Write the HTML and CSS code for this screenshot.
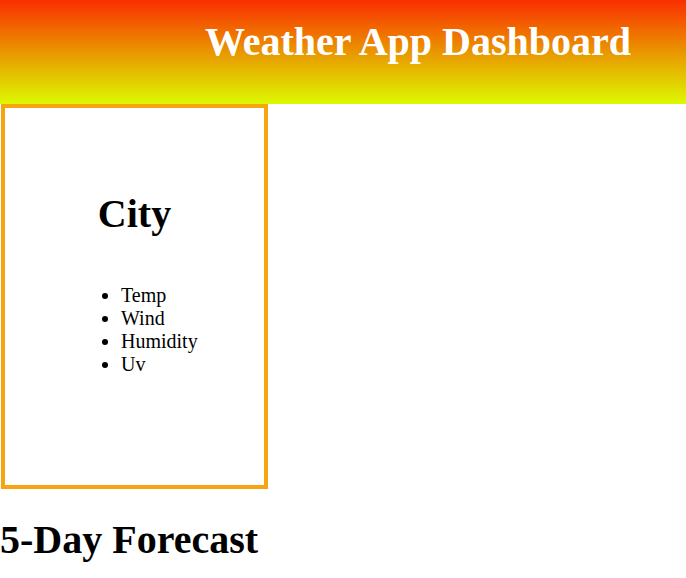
FILE: index.html
```html
<!DOCTYPE html>
<html>
<head>
<meta charset="utf-8">
<link rel="stylesheet" href="styles.css">
</head>
<body>
<header class="header">
  <h1 class="title">Weather App Dashboard</h1>
</header>
<main class="main">
  <section class="city-card">
    <h2 class="city-name">City</h2>
    <ul class="city-stats">
      <li>Temp</li>
      <li>Wind</li>
      <li>Humidity</li>
      <li>Uv</li>
    </ul>
  </section>
  <h2 class="forecast-title">5-Day Forecast</h2>
</main>
</body>
</html>
```
FILE: styles.css
```css
html, body {
  margin: 0;
  padding: 0;
  background: #ffffff;
  font-family: "Liberation Serif", "Times New Roman", serif;
  color: #000;
}
.header {
  height: 104px;
  background: linear-gradient(to bottom, #fa2e00 0%, #e8a000 55%, #ddf900 100%);
  display: flex;
  padding-left: 205px;
  box-sizing: border-box;
}
.title {
  margin: 20px 0 0 0;
  color: #fff;
  font-size: 40px;
  font-weight: bold;
  line-height: 44px;
}
.main {
  display: flex;
  flex-direction: column;
  align-items: flex-start;
}
.city-card {
  margin-left: 1px;
  width: 267px;
  height: 385px;
  box-sizing: border-box;
  border: 4px solid #f6a40f;
  display: flex;
  flex-direction: column;
  align-items: center;
  padding-top: 84px;
}
.city-name {
  margin: 0;
  font-size: 40px;
  font-weight: bold;
  line-height: 44px;
}
.city-stats {
  margin: 48px 0 0 96px;
  padding-left: 20px;
  font-size: 20px;
  line-height: 23px;
  align-self: flex-start;
}
.forecast-title {
  margin: 29px 0 0 0;
  font-size: 40px;
  font-weight: bold;
  line-height: 44px;
}
```
